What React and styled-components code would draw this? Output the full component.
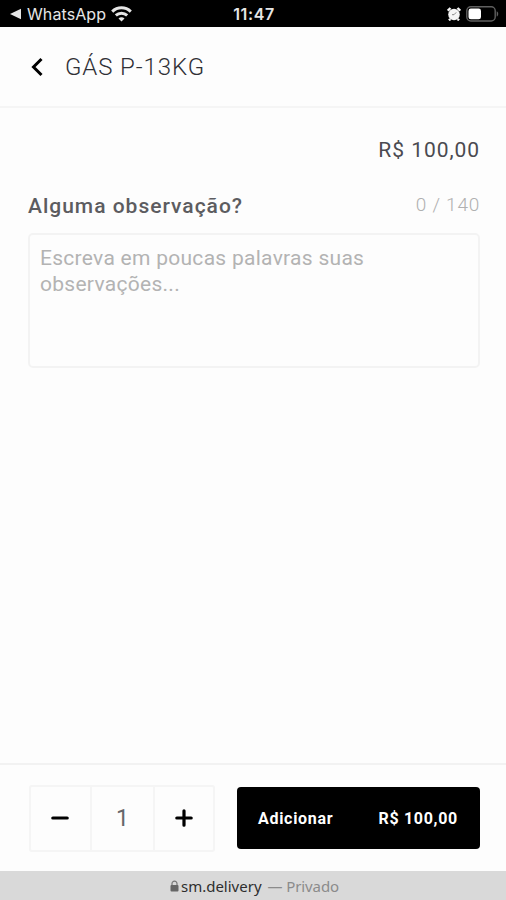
import { useState } from 'react';
import styled, { createGlobalStyle } from 'styled-components';

const GlobalStyle = createGlobalStyle`
    * {
        box-sizing: border-box;
        margin: 0;
        padding: 0;
    }

    body {
        background: #fdfdfd;
        font-family: Roboto, "Liberation Sans", sans-serif;
    }

    button, textarea {
        font-family: inherit;
        border: none;
        background: none;
    }
`;

const Screen = styled.div`
    display: flex;
    flex-direction: column;
    height: 900px;
    width: 506px;
    overflow: hidden;
    background: #fdfdfd;
`;

const StatusBar = styled.div`
    display: grid;
    grid-template-columns: 1fr auto 1fr;
    align-items: center;
    height: 27px;
    padding: 1px 7px 0 9px;
    background: black;
    color: #e6e6e6;
    font-family: Inter, "Liberation Sans", sans-serif;
`;

const StatusGroup = styled.div`
    display: flex;
    align-items: center;
    justify-content: ${({ $end }) => ($end ? 'flex-end' : 'flex-start')};
    gap: ${({ $end }) => ($end ? '5px' : '5px')};
`;

const BackApp = styled.span`
    font-size: 16px;
    line-height: 20px;
    letter-spacing: 0.1px;
`;

const Clock = styled.span`
    font-size: 16px;
    font-weight: 600;
    line-height: 20px;
    letter-spacing: 0.6px;
`;

const Header = styled.header`
    display: flex;
    align-items: center;
    gap: 20px;
    height: 81px;
    padding: 0 30px;
    border-bottom: 2px solid #f5f5f5;
`;

const BackButton = styled.button`
    display: flex;
    width: 15px;
`;

const Title = styled.h1`
    color: #303036;
    font-size: 24px;
    font-weight: 300;
    letter-spacing: 0.9px;
`;

const Main = styled.main`
    flex: 1;
    padding: 28px 26px 0 28px;
`;

const Price = styled.p`
    color: #4a4a50;
    font-size: 21px;
    line-height: 28px;
    letter-spacing: 0.95px;
    text-align: right;
`;

const LabelRow = styled.div`
    display: flex;
    justify-content: space-between;
    align-items: center;
    height: 28px;
    margin-top: 28px;
`;

const Label = styled.label`
    color: #5c5c60;
    font-size: 21px;
    font-weight: 500;
    letter-spacing: 1px;
`;

const Counter = styled.span`
    padding-bottom: 3px;
    color: #b0b0b0;
    font-size: 19px;
    font-weight: 300;
    letter-spacing: 0.75px;
`;

const Note = styled.textarea`
    display: block;
    width: 100%;
    height: 135px;
    margin-top: 13px;
    padding: 10px;
    border: 2px solid #f3f3f3;
    border-radius: 5px;
    color: #55555a;
    font-size: 21px;
    line-height: 26px;
    letter-spacing: 0.28px;
    resize: none;
    outline: none;

    &::placeholder {
        color: #b3b3b3;
    }
`;

const Footer = styled.footer`
    display: flex;
    align-items: center;
    justify-content: space-between;
    height: 108px;
    padding: 0 26px 0 29px;
    border-top: 2px solid #f2f2f2;
`;

const Stepper = styled.div`
    display: grid;
    grid-template-columns: 59px 65px 58px;
    width: 186px;
    height: 67px;
    border: 2px solid #f5f5f5;
    border-radius: 3px;
`;

const StepCell = styled.div`
    display: flex;
    align-items: center;
    justify-content: center;
    color: #66666a;
    font-size: 23px;
    border-left: 2px solid #f5f5f5;
    border-right: 2px solid #f5f5f5;
`;

const StepButton = styled.button`
    display: flex;
    align-items: center;
    justify-content: center;
    padding-right: 1px;
`;

const AddButton = styled.button`
    display: flex;
    align-items: center;
    justify-content: space-between;
    width: 243px;
    height: 62px;
    padding: 1px 22px 0 21px;
    border-radius: 4px;
    background: black;
    color: white;
    font-size: 16px;
    font-weight: 700;
    letter-spacing: 0.7px;
`;

const AddressBar = styled.div`
    display: flex;
    align-items: center;
    justify-content: center;
    height: 29px;
    padding-left: 3px;
    background: #d9d9d9;
    color: #2e2e2e;
    font-family: "Noto Sans", sans-serif;
    font-size: 15px;
`;

const Domain = styled.span`
    margin-left: 2px;
`;

const Private = styled.span`
    margin-left: 6px;
    color: #8b8b8b;
    letter-spacing: -0.1px;
`;

function WifiIcon() {
    return (
        <svg width="21" height="16" viewBox="0 0 21 16" fill="none" stroke="#e6e6e6" strokeWidth="3">
            <path d="M1.2 5.6C6.5 .6 14.5 .6 19.8 5.6" />
            <path d="M4.8 9.4c3.3-3 8.1-3 11.4 0" />
            <path d="M10.5 15.5l-3-3.1c1.7-1.6 4.3-1.6 6 0z" fill="#e6e6e6" stroke="none" />
        </svg>
    );
}

function AlarmIcon() {
    return (
        <svg width="14" height="14" viewBox="0 0 14 14">
            <circle cx="7" cy="7.5" r="5.8" fill="#f5f5f5" />
            <path d="M.8 3.7L3.5 1M13.2 3.7L10.5 1M3.3 12L2 13.4M10.7 12l1.3 1.4" stroke="#f5f5f5" strokeWidth="2.4" />
            <path d="M5 7.7H7l2.2-2.3" fill="none" stroke="#888" strokeWidth="1" />
        </svg>
    );
}

function BatteryIcon() {
    return (
        <svg width="33" height="16" viewBox="0 0 33 16">
            <rect x=".8" y=".8" width="28.4" height="14.2" rx="4" fill="none" stroke="#606060" strokeWidth="1.4" />
            <rect x="2.5" y="2.5" width="12.5" height="10.8" rx="2.4" fill="white" />
            <path d="M30.7 5.3c2 .8 2 4.5 0 5.3z" fill="#606060" />
        </svg>
    );
}

function LockIcon() {
    return (
        <svg width="9" height="12" viewBox="0 0 9 12">
            <path d="M2 6V3.6a2.5 2.5 0 0 1 5 0V6" fill="none" stroke="#777" strokeWidth="1.2" />
            <rect x=".5" y="5" width="8" height="6.5" rx="1" fill="#666" />
        </svg>
    );
}

function App() {
    const [note, setNote] = useState('');
    const [amount, setAmount] = useState(1);
    const total = `R$ ${amount * 100},00`;

    return (
        <Screen>
            <GlobalStyle />
            <StatusBar>
                <StatusGroup>
                    <svg width="13" height="12" viewBox="0 0 13 12">
                        <path d="M1 6L12 .8v10.4z" fill="#e6e6e6" />
                    </svg>
                    <BackApp>WhatsApp</BackApp>
                    <WifiIcon />
                </StatusGroup>
                <Clock>11:47</Clock>
                <StatusGroup $end>
                    <AlarmIcon />
                    <BatteryIcon />
                </StatusGroup>
            </StatusBar>
            <Header>
                <BackButton aria-label="Voltar">
                    <svg width="15" height="20" viewBox="0 0 15 20">
                        <path d="M11.5 2L3.5 10l8 8" fill="none" stroke="black" strokeWidth="3" />
                    </svg>
                </BackButton>
                <Title>GÁS P-13KG</Title>
            </Header>
            <Main>
                <Price>R$ 100,00</Price>
                <LabelRow>
                    <Label htmlFor="note">Alguma observação?</Label>
                    <Counter>{note.length} / 140</Counter>
                </LabelRow>
                <Note
                    id="note"
                    maxLength={140}
                    placeholder="Escreva em poucas palavras suas observações..."
                    value={note}
                    onChange={(e) => setNote(e.target.value)}
                />
            </Main>
            <Footer>
                <Stepper>
                    <StepButton aria-label="Diminuir" onClick={() => setAmount(Math.max(1, amount - 1))}>
                        <svg width="18" height="18" viewBox="0 0 18 18">
                            <path d="M1.8 9h14.4" stroke="black" strokeWidth="3.2" strokeLinecap="round" />
                        </svg>
                    </StepButton>
                    <StepCell>{amount}</StepCell>
                    <StepButton aria-label="Aumentar" onClick={() => setAmount(amount + 1)}>
                        <svg width="18" height="18" viewBox="0 0 18 18">
                            <path d="M1.8 9h14.4M9 1.8v14.4" stroke="black" strokeWidth="3.2" strokeLinecap="round" />
                        </svg>
                    </StepButton>
                </Stepper>
                <AddButton>
                    <span>Adicionar</span>
                    <span>{total}</span>
                </AddButton>
            </Footer>
            <AddressBar>
                <LockIcon />
                <Domain>sm.delivery</Domain>
                <Private>— Privado</Private>
            </AddressBar>
        </Screen>
    );
}

export default App;
